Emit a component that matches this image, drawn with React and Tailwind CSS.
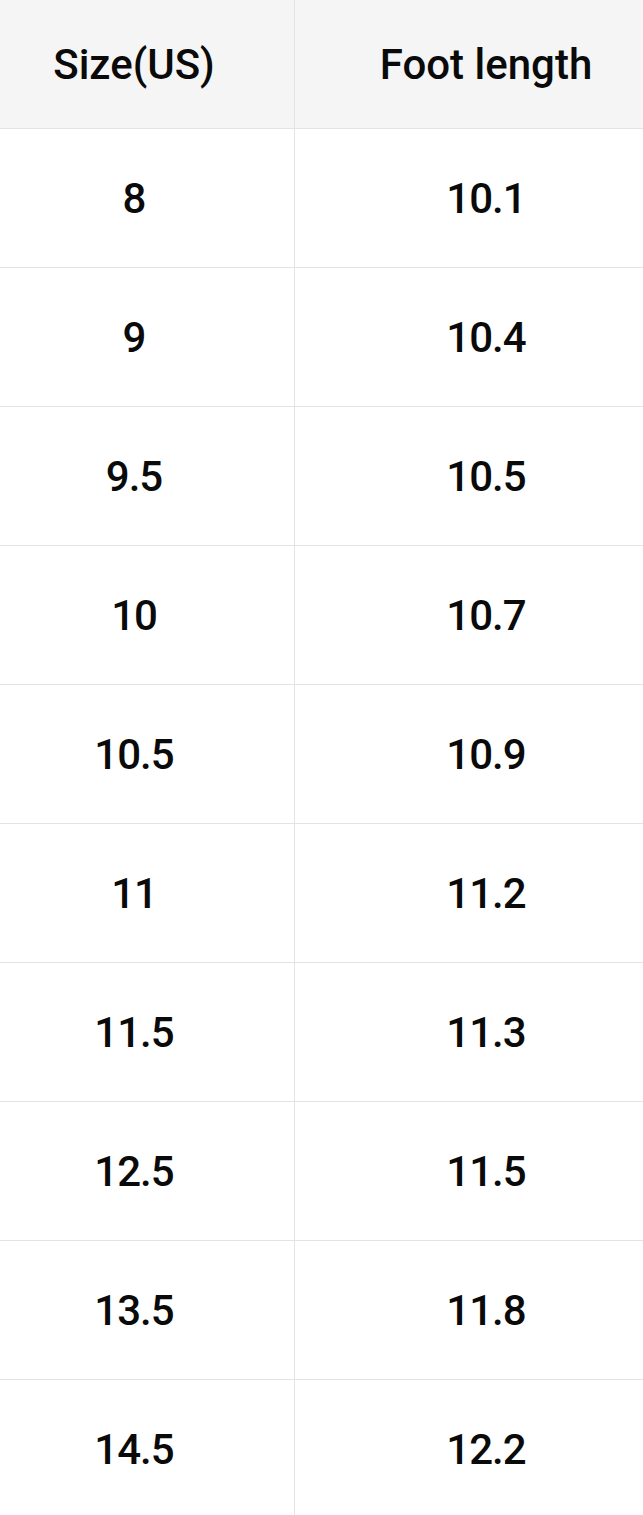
import React from 'react';

const rows = [
  ['8', '10.1'],
  ['9', '10.4'],
  ['9.5', '10.5'],
  ['10', '10.7'],
  ['10.5', '10.9'],
  ['11', '11.2'],
  ['11.5', '11.3'],
  ['12.5', '11.5'],
  ['13.5', '11.8'],
  ['14.5', '12.2'],
];

export default function App() {
  return (
    <div className="w-[643px] h-[1515px] overflow-hidden bg-white text-[#0a0a0a] font-['Roboto',sans-serif] font-medium text-[42px]">
      <div className="grid grid-cols-[295px_1fr] h-[129px] bg-[#f5f5f5] border-b border-[#e3e3e3]">
        <div className="flex items-center justify-center pr-[26px] border-r border-[#e3e3e3]">Size(US)</div>
        <div className="flex items-center justify-center pl-[34px]">Foot length</div>
      </div>
      {rows.map(([size, len], i) => (
        <div key={i} className="grid grid-cols-[295px_1fr] h-[139px] border-b border-[#e3e3e3] tracking-[-1px]">
          <div className="flex items-center justify-center pr-[26px] border-r border-[#e3e3e3]">{size}</div>
          <div className="flex items-center justify-center pl-[34px]">{len}</div>
        </div>
      ))}
    </div>
  );
}
